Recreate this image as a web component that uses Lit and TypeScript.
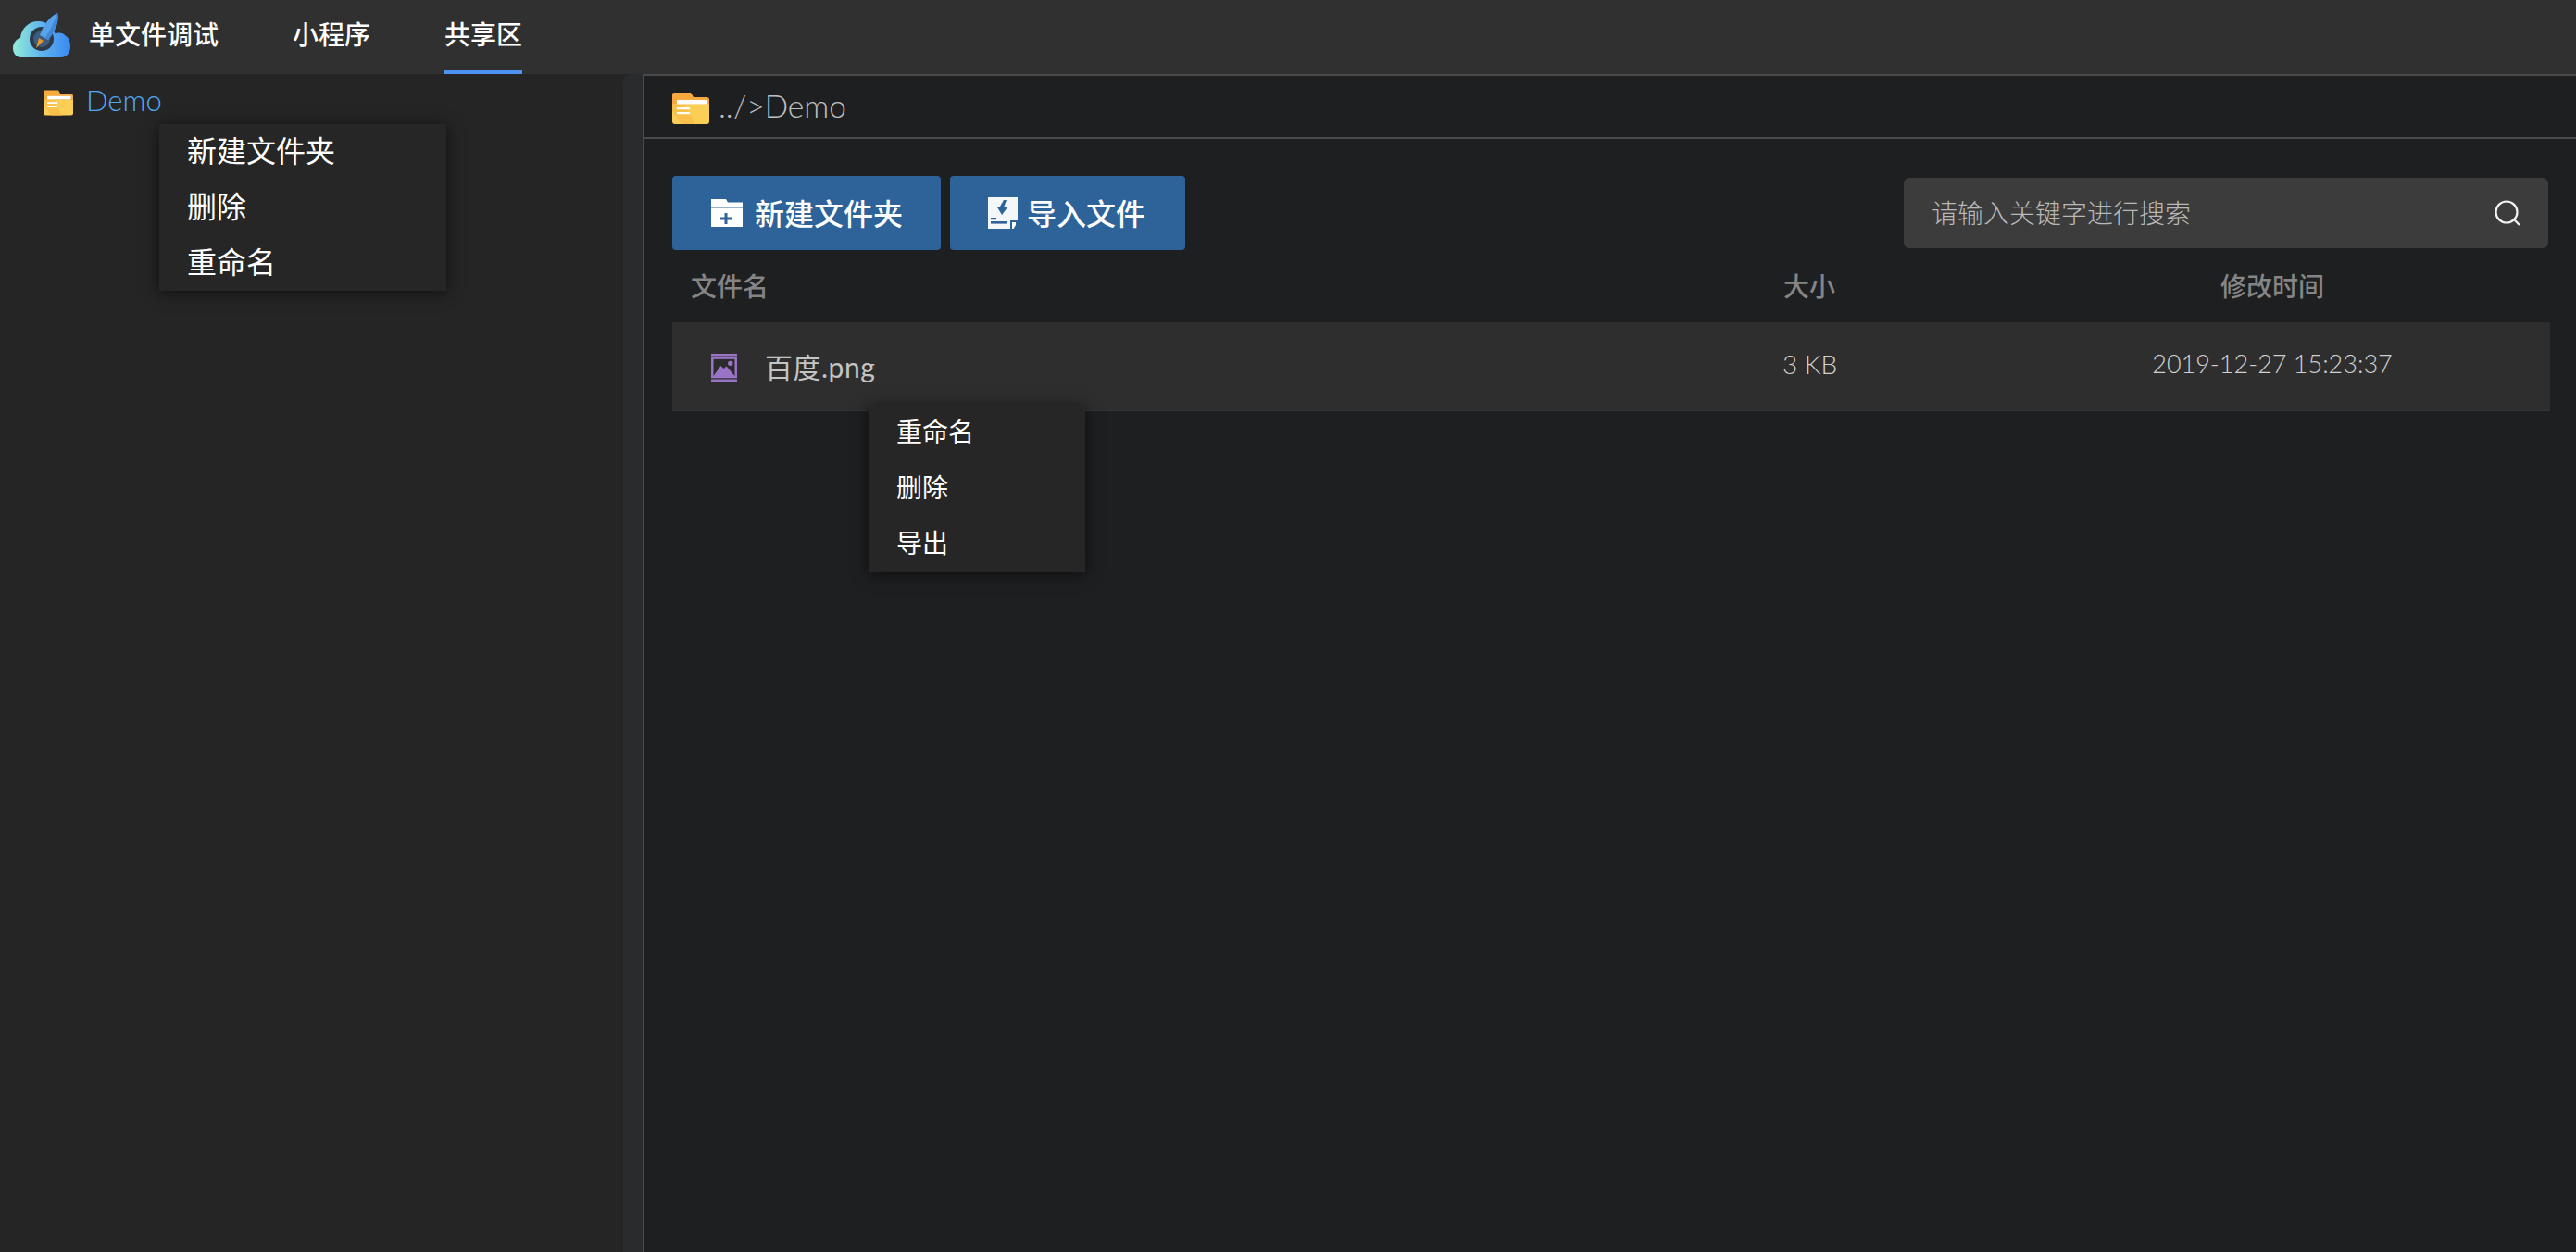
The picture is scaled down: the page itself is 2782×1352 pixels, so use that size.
import { LitElement, css, html, svg } from 'lit';
import { customElement, state } from 'lit/decorators.js';

const folderIcon = (w: number, h: number) => html`
  <svg width=${w} height=${h} viewBox="0 0 40 34">
    <path d="M2 0H20L23 5H37A3 3 0 0 1 40 8V13H0V2A2 2 0 0 1 2 0Z" fill="#f5a93e" />
    <path d="M0 12.5H40V31A3 3 0 0 1 37 34H3A3 3 0 0 1 0 31Z" fill="#fbcf56" />
    <path d="M0 12.5H14L25 34H10L0 20Z" fill="#f9c14c" />
    <rect x="5" y="8" width="32" height="4.5" fill="#fff" />
    <rect x="5" y="16" width="14" height="2.2" fill="#fff" />
    <rect x="5" y="21" width="14" height="2.2" fill="#fff" />
  </svg>
`;

const logo = html`
  <svg class="logo" width="62" height="48" viewBox="0 0 62 48">
    <defs>
      <linearGradient id="cloud" x1="0" x2="1" y1="0" y2="0">
        <stop offset="0" stop-color="#93ecd9" />
        <stop offset="0.5" stop-color="#5fb4ee" />
        <stop offset="1" stop-color="#3a88f2" />
      </linearGradient>
    </defs>
    <path
      d="M9 48C3 48 0 43 0 38C0 32 4 28 8 27C9 16 18 8 29 9C37 10 43 15 46 23C48 21 53 21 56 24C60 26 62 31 62 36C62 43 58 48 52 48Z"
      fill="url(#cloud)"
    />
    <circle cx="31" cy="28" r="13" fill="#2c3a48" />
    <circle cx="31" cy="28" r="9" fill="#3b5c7c" />
    <path d="M48 0C50 8 47 18 38 29L29 24C33 12 40 4 48 0Z" fill="#57a3ea" />
    <path d="M48 0C50 8 47 18 38 29L35 27C41 17 45 8 48 0Z" fill="#3f88da" />
    <path d="M28 27L33 30L25 38Z" fill="#e9942c" />
  </svg>
`;

const newFolderIcon = html`
  <svg width="34" height="30" viewBox="0 0 34 30">
    <path d="M0 0H16L18 3.5H34V8H0Z" fill="#fff" />
    <path d="M0 9.5H34V30H0Z" fill="#fff" />
    <path d="M14.5 15H17.5V19.5H22V22.5H17.5V27H14.5V22.5H10V19.5H14.5Z" fill="#2d6399" />
  </svg>
`;

const importIcon = html`
  <svg width="32" height="34" viewBox="0 0 32 34">
    <rect width="32" height="34" fill="#f4f7fa" />
    <path d="M17 3L13 10H9.5L15 19L21 11H17L20 3Z" fill="#2d6399" />
    <rect x="3" y="22" width="6" height="2.2" fill="#2d6399" />
    <rect x="3" y="26" width="17" height="2.6" fill="#2d6399" />
    <path d="M24 25H32V34H24Z" fill="#2d6399" />
    <path d="M26 27H30V30L27.5 34H26Z" fill="#fff" />
  </svg>
`;

const imageIcon = html`
  <svg class="image-icon" width="28" height="30" viewBox="0 0 27 29">
    <rect width="27" height="2.4" fill="#9a74c6" />
    <rect y="3.4" width="27" height="22" fill="#9a74c6" />
    <rect x="2.4" y="5.6" width="22.2" height="17.6" fill="#2c2c2c" />
    <path d="M2.4 23.2L10 12.5L13 15.5L16 13L24.6 23.2Z" fill="#9a74c6" />
    <circle cx="20" cy="10" r="2.6" fill="#9a74c6" />
    <rect y="26.6" width="27" height="2.4" fill="#9a74c6" />
  </svg>
`;

const searchIcon = svg`
  <svg class="search-icon" width="28" height="28" viewBox="0 0 28 28" fill="none" stroke="#f2f2f2" stroke-width="2.2">
    <circle cx="13" cy="13" r="11.5" />
    <path d="M21 21L27 27" />
  </svg>
`;

@customElement('app-root')
export class AppRoot extends LitElement {
    @state() tabs = ['单文件调试', '小程序', '共享区'];
    @state() activeTab = '共享区';

    render() {
        return html`
      <header>
        ${logo}
        <nav>
          ${this.tabs.map(t => html`<a class=${t === this.activeTab ? 'tab active' : 'tab'}>${t}</a>`)}
        </nav>
      </header>
      <main>
        <aside>
          <div class="tree-item">
            ${folderIcon(32, 28)}
            <span class="tree-label">Demo</span>
          </div>
          <div class="scroll-strip"></div>
          <ul class="menu menu-large">
            <li>新建文件夹</li>
            <li>删除</li>
            <li>重命名</li>
          </ul>
        </aside>
        <section class="panel">
          <div class="crumb">
            ${folderIcon(40, 34)}
            <span>../>Demo</span>
          </div>
          <div class="body">
            <div class="toolbar">
              <button class="first">${newFolderIcon}<span>新建文件夹</span></button>
              <button class="second">${importIcon}<span>导入文件</span></button>
              <div class="search">
                <span>请输入关键字进行搜索</span>
                ${searchIcon}
              </div>
            </div>
            <div class="thead">
              <div class="th-name">文件名</div>
              <div>大小</div>
              <div class="time">修改时间</div>
            </div>
            <div class="row">
              <div class="name">${imageIcon}<span>百度.png</span></div>
              <div class="cell">3 KB</div>
              <div class="cell time date">2019-12-27 15:23:37</div>
              <ul class="menu menu-small">
                <li>重命名</li>
                <li>删除</li>
                <li>导出</li>
              </ul>
            </div>
          </div>
        </section>
      </main>
    `;
    }

    static styles = css`
    :host {
      display: block;
      height: 100vh;
      overflow: hidden;
      background: #1e1f21;
      font-family: "Noto Sans CJK SC", sans-serif;
    }

    header {
      display: flex;
      align-items: flex-start;
      height: 80px;
      background: #303030;
      box-sizing: border-box;
      padding-left: 14px;
    }

    .logo {
      margin-top: 14px;
      flex: none;
    }

    nav {
      display: flex;
      gap: 80px;
      margin-left: 20px;
    }

    .tab {
      display: flex;
      align-items: center;
      height: 72px;
      padding-bottom: 4px;
      font-size: 28px;
      font-weight: 500;
      color: #fff;
      border-bottom: 4px solid transparent;
    }

    .tab.active {
      border-bottom-color: #4d94f0;
    }

    main {
      display: flex;
      height: calc(100vh - 80px);
    }

    aside {
      position: relative;
      flex: none;
      width: 694px;
      background: #252525;
    }

    .scroll-strip {
      position: absolute;
      top: 0;
      right: 0;
      bottom: 0;
      width: 21px;
      background: #2a2b2d;
      border-top-left-radius: 8px;
    }

    .tree-item {
      display: flex;
      align-items: center;
      gap: 14px;
      padding: 17px 0 0 47px;
    }

    .tree-label {
      font-family: Lato, sans-serif;
      font-weight: 300;
      font-size: 31px;
      line-height: 28px;
      margin-top: -7px;
      color: #52a8f0;
    }

    .menu {
      position: absolute;
      z-index: 2;
      margin: 0;
      padding: 0;
      list-style: none;
      background: #262626;
      box-shadow: 0 2px 16px rgba(0, 0, 0, 0.6);
      color: #fff;
    }

    .menu li {
      display: flex;
      align-items: center;
      height: 60px;
      box-sizing: border-box;
      padding-bottom: 6px;
    }

    .menu-large {
      left: 172px;
      top: 54px;
      width: 310px;
      padding-left: 30px;
      box-sizing: border-box;
      font-size: 32px;
      font-weight: 400;
    }

    .menu-small {
      left: 212px;
      top: 90px;
      width: 234px;
      padding-left: 30px;
      box-sizing: border-box;
      font-size: 28px;
      font-weight: 400;
    }

    .panel {
      flex: 1;
      min-width: 0;
      display: flex;
      flex-direction: column;
      border-left: 2px solid #4a4a4a;
      border-top: 2px solid #4a4a4a;
      color: #c0c0c0;
    }

    .crumb {
      display: flex;
      align-items: center;
      gap: 10px;
      box-sizing: border-box;
      padding: 0 0 2px 30px;
      border-bottom: 2px solid #4a4a4a;
      height: 68px;
      font-family: Lato, sans-serif;
      font-weight: 300;
      font-size: 33.5px;
    }

    .crumb svg {
      margin-top: 5px;
    }

    .body {
      padding: 40px 28px 0 30px;
    }

    .toolbar {
      display: flex;
      align-items: center;
      height: 80px;
    }

    button {
      display: flex;
      align-items: center;
      height: 80px;
      border: 0;
      padding: 0;
      border-radius: 4px;
      background: #2d6399;
      color: #fff;
      font: 500 32px "Noto Sans CJK SC", sans-serif;
    }

    button span {
      margin-top: -3px;
    }

    button.first {
      width: 290px;
      padding-left: 42px;
      gap: 13px;
    }

    button.second {
      width: 254px;
      margin-left: 10px;
      padding-left: 41px;
      gap: 10px;
    }

    .search {
      display: flex;
      align-items: center;
      justify-content: space-between;
      margin-left: auto;
      margin-right: 2px;
      width: 696px;
      height: 76px;
      box-sizing: border-box;
      padding: 0 30px 0 30px;
      border-radius: 6px;
      background: #3c3c3c;
      font-size: 28px;
      font-weight: 300;
      color: #b8b8b8;
    }

    .search span {
      margin-top: -2px;
    }

    .search-icon {
      margin-right: 0;
    }

    .thead,
    .row {
      display: grid;
      grid-template-columns: 1200px 228px 600px;
      align-items: center;
    }

    .thead {
      height: 78px;
      padding-bottom: 2px;
      box-sizing: border-box;
      font-size: 28px;
      font-weight: 500;
      color: #858585;
    }

    .th-name {
      padding-left: 20px;
    }

    .time {
      text-align: center;
    }

    .row {
      position: relative;
      height: 96px;
      background: #2e2e2e;
      border-bottom: 1px solid #333;
      box-sizing: border-box;
    }

    .name {
      display: flex;
      align-items: center;
      gap: 30px;
      padding-left: 42px;
      font-family: Lato, "Noto Sans CJK SC", sans-serif;
      font-size: 30px;
      font-weight: 400;
      letter-spacing: 0.5px;
      color: #c4c4c4;
    }

    .name span {
      margin-top: -2px;
    }

    .image-icon {
      margin-top: 2px;
    }

    .cell {
      font-family: Lato, sans-serif;
      font-size: 28px;
      font-weight: 300;
      color: #d0d0d0;
      margin-top: -6px;
      margin-left: -1px;
    }

    .cell.date {
      font-size: 27px;
      margin-left: 0;
    }
  `;
}

declare global {
    interface HTMLElementTagNameMap {
        'app-root': AppRoot;
    }
}
